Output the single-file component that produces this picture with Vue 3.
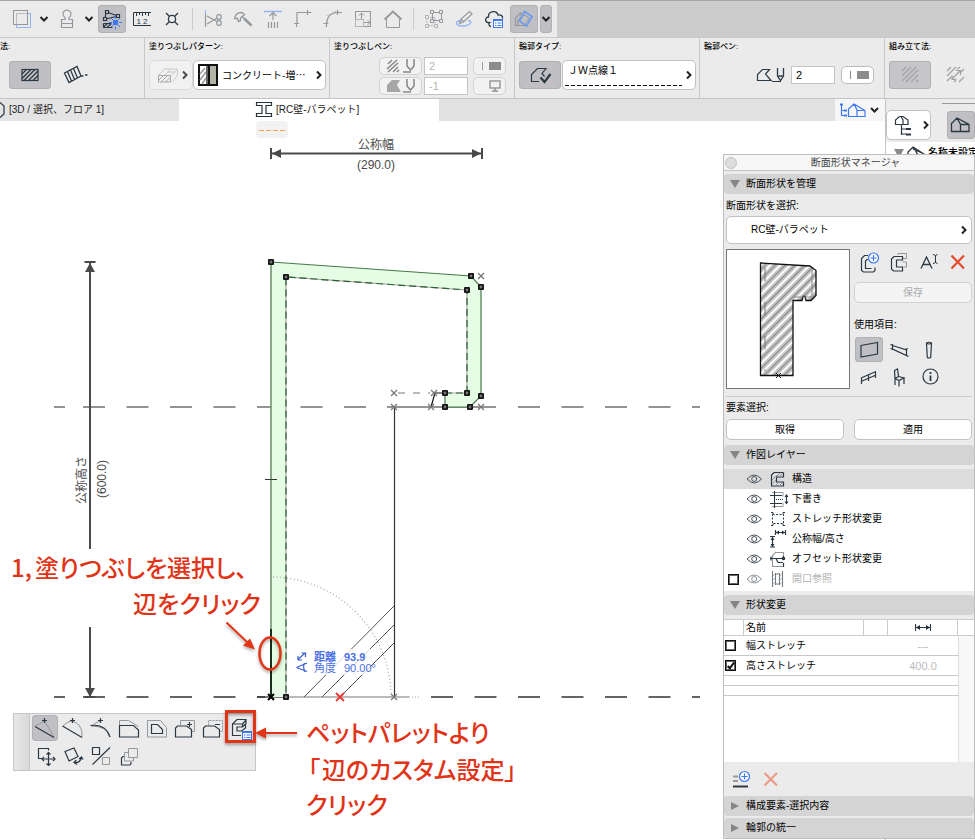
<script setup>
import { ref } from 'vue'

const INK = '#2c3842'
const DIM = '#94989c'
const BLUE = '#3f78f5'

const g = (stroke, body, width = 1) =>
  `<g fill="none" stroke="${stroke}" stroke-width="${width}">${body}</g>`

const listBadge = (x, y) =>
  `<rect x="${x}" y="${y}" width="9" height="8" fill="#fff" stroke="${BLUE}"/><path d="M${x} ${y + 0.5}h9" stroke="${BLUE}" stroke-width="2"/><path d="M${x + 1.5} ${y + 3.5}h1.5m1 0h4m-6.5 2.5h1.5m1 0h4" stroke="${BLUE}" fill="none"/>`

const icons = {
  duplicate: g('#8fb3f0', '<path d="M20 8.5h2.5v14h-14v-2.5"/>') + g(DIM, '<rect x="5.5" y="5.5" width="14" height="14"/>') + g('#b9bcbf', '<path d="M8.5 19V8.5H19"/>'),
  stamp: g(DIM, '<path d="M8.500 22.500v-8h3.500v-2a4 4 0 1 1 4 0v2h3.500v8zM8.500 18.500h11"/>', 1.2),
  magic: g(INK, '<path d="M8.500 7L20 11M8 7l-1 7M8 14l12-3M5.500 18.500h8M5.500 22.500h9M5.500 22l4-3.500M9.500 22l4-3.500M5.500 18.500v4"/><path d="M7.500 5.500h3v3h-3zM18.500 9.500h3v3h-3zM5.500 12.500h3v3h-3z" fill="#c0c0c4"/>', 1.2) + `<rect x="15" y="15" width="5" height="5" fill="${BLUE}"/>` + g(BLUE, '<path d="M17.500 11v3M17.500 21.500v3M11 17.500h3M21 17.500h3M13 13l2 2M22 13l-2 2M13 22l2-2M22 22l-2-2"/>'),
  ruler: g(INK, '<path d="M23 7.500H5.500v13H23M8.500 8v3M11.500 8v2M14.500 8v3M17.500 8v2M20.500 8v3"/>') + `<text x="8.500" y="19" font-size="8" font-family="Liberation Sans" fill="${INK}">1</text><text x="15" y="19" font-size="8" font-family="Liberation Sans" fill="${INK}">2</text>`,
  burst: g(INK, '<circle cx="14" cy="14" r="3.600"/><path d="M8 8l3.500 3.500M20 8l-3.500 3.500M8 20l3.500-3.500M20 20l-3.500-3.500"/>', 1.3),
  scissors: g('#8fb3f0', '<path d="M6.500 5v4"/>') + g(DIM, '<path d="M6.500 9v13M8 11l10 5.500M8 19l10-6"/><circle cx="20" cy="12" r="2.300"/><circle cx="20" cy="18" r="2.300"/>', 1.2),
  axe: g(DIM, '<path d="M5.500 13.500C6 10 8.500 7.500 13 7.500l2.500 2-4 3.500v2.500l-2 1-1-3z"/><path d="M13 11.500l9.500 9"/>', 1.3) + g(DIM, '<path d="M15 13.500l7.500 7"/>', 2.4),
  raise: g('#8fb3f0', '<path d="M5 6.500h18"/>', 1.4) + g(DIM, '<path d="M14 8v7M10.500 11L14 7.500l3.500 3.500M9.500 17v6M12.500 17v6M15.500 17v6M18.500 17v6"/>', 1.2),
  corner: g(DIM, '<path d="M8 8v11M18 7.500H7.500M22.500 7.500h-4M18.500 5v5M5 18.500h5M7.500 18v4"/>', 1.2),
  arc: g(DIM, '<path d="M7.500 19C8 12 12 7.500 19 7.500M4.500 18.500h5M18.500 5v5M16 7.500h7M7.500 19v3"/>', 1.2) + g('#bbb', '<path d="M8 11l9-5"/>'),
  resize: g(DIM, '<rect x="6.500" y="6.500" width="15" height="15"/><path d="M12.500 8v6M10 10.500L12.500 8l2.500 2.500M15 17.500h6M18.500 15l2.500 2.500-2.500 2.500"/>') + g('#b4b7ba', '<rect x="6.500" y="14.500" width="8" height="7"/>'),
  home: g(DIM, '<path d="M5.500 14.500L14 6.500l8.500 8"/>', 1.8) + g(DIM, '<path d="M7.500 14v8.500h13V14"/>'),
  nodes: g('#b0b3b6', '<path d="M7 12.500h8v8H7z" stroke-dasharray="2 1"/><path d="M5.500 10.500h3v3h-3zM5.500 19.500h3v3h-3zM14.500 19.500h3v3h-3z" fill="#ebebeb"/>') + g(DIM, '<path d="M12.500 7.500h9v8h-9z"/><path d="M10.500 5.500h3v3h-3zM19.500 5.500h3v3h-3zM10.500 14.500h3v3h-3zM19.500 14.500h3v3h-3z" fill="#ebebeb"/>'),
  sketch: g('#8fb3f0', '<path d="M12 15.500c-5 0-6.500 2-5 4 2 2 9 2 12 0 3-2 2-4-1-4"/>', 1.4) + g(DIM, '<path d="M9.500 18.500l1.500-4.500 8.500-7.500 2.500 2.500-8.500 8zM11 14l2.500 2.500"/>', 1.2),
  cloud: g(INK, '<path d="M11 21.500c-2.500 0-2.500-3-1.500-3.800-5 .3-5-5.700-1-5.700-.5-6 8.500-7.500 9.500-2 3.500-.500 5 1.500 4.500 3.500"/>', 1.3) + listBadge(13.5, 14.5),
  trace: g(DIM, '<path d="M12 8h-1.500l-5 5v7.500h11M10.500 8.500v2M8 20.500v-5l6-6"/>', 1.2) + g('#6d9bea', '<path d="M14.500 6.500l7.500 5-5.500 9.500-7-5z"/>', 1.8) + g(DIM, '<path d="M14 9.500l5 3.500-3.500 5.500"/>'),
  hatchRect: g(INK, '<rect x="6" y="8.500" width="16" height="11"/><path d="M6 13l4.500-4.500M6 17.500l9-9M8 19.500l11-11M12.500 19.500l9.500-9.500M17 19.500l5-5"/>', 1.2),
  hatchTilt: g(INK, '<path d="M3.500 12L16 5.500l4 9.500L8 21.500zM6.500 10.500l4 9.500M9.500 9l4 9.500M12.500 7.500l4 9.500M20 15h2.500m1.500-1h2.500"/>', 1.3),
  slab: g('#c0c3c5', '<path d="M5.500 14.500l6-6.500h13v6l-5 7M24.500 8l-6 6.500M14 11h8M18 8l-6 6"/>') + g(DIM, '<path d="M5.500 14.500h12v6.500h-12zM6 19l4-4M8 21l6-6M12.500 21l4.500-4.500"/>'),
  outlineType: g(INK, '<path d="M13 20.500H5.500v-7l6-6H20l-4 5 2.500 3"/>', 1.2) + g(INK, '<path d="M14.500 16.500l4 4.500 6-8"/>', 2.2),
  outlinePen: g(INK, '<path d="M1.500 13.500V7.500l5-5h7l-4 4.500 5.500 6.500H1.500zM16 14.500h9" stroke-width="1.200"/><path d="M21.500 1v8l3 4.500 3-4.500V1M22.500 9h4" stroke-width="1.300"/>'),
  hatchDim: g('#a0a2a4', '<path d="M6 10l4-4M6 15l9-9M6 20l14-14M10 21l12-12M15 21l7-7M20 21l2-2"/>', 1.1),
  hatchSwap: g('#9c9fa2', '<path d="M6 10l4-4M6 15l9-9M16 8l3-2M6 20l4-4M18 21l5-5M13 21l2-2M20 11l3-3M11 18l8-8M15 9.500h4.500V14M11 14v4.500h4.500"/>', 1.1),
  navTree: g(INK, '<path d="M3.500 13V8l4-3.500h3.500L16 8v4.500h-5V8L9 4.500M3.500 12.500h7.500M9.500 13v10M9.500 17h5M9.500 22h5"/>', 1.2) + g(INK, '<path d="M14 17h5M14 22.500h5"/>', 2),
  navHouse: g(INK, '<path d="M4.500 20.500v-8L10 7l12 6.500v7zM10 7l3.500 6.500v7M13.500 13.500h8"/>', 1.3),
  profileNew: g(INK, '<path d="M13 6.500H9.500l-3 3v12l2 1.500h10l1.500-1.500v-3M13 10.500h-1l-1.500 1.500v7.500h6"/>', 1.2) + g(BLUE, '<circle cx="18.500" cy="9" r="5" fill="#fff"/><path d="M18.500 6v6M15.500 9h6"/>', 1.2),
  profileCopy: g(DIM, '<path d="M13 6V4.500h8.500v5H17M17.500 13h4v5h-3"/>', 1) + g(INK, '<path d="M17.500 11V7.500H9l-2.500 2.500v10l2 2h9v-4h-6v-7z"/>', 1.2),
  rename: g(INK, '<path d="M6 19.500L11.500 8 17 19.500M8 15.500h7"/><path d="M18 5.500q2 0 2.500 1.500q.500-1.500 2-1.500M20.500 7v6.500M18 14.500q2 0 2.500-1.500q.500 1.500 2 1.500" stroke-width="1"/>', 1.3),
  remove: g('#e3492a', '<path d="M6.500 6.500l12.500 13M19 6.500l-12.500 13"/>', 2.2),
  useWall: g(INK, '<path d="M6 8.500l16.500-3v11.500L6 20z"/>', 1.2),
  useBeam: g(INK, '<path d="M7.500 8.500l14 4.500v5.500L7.500 12zM5.500 7.500l2.500 1M20 12.500l3-1M21.500 18.500l2 1M5.500 11.500l2 .500M7.500 7v6"/>', 1.2),
  useColumn: g(INK, '<path d="M11.500 6q2.500-1.500 5 0l-.800 14.500q-1.700 1-3.400 0zM11.500 6q2.500 2 5 0"/>', 1.2),
  useRail: g(INK, '<path d="M6 14l15-6.500M6 17.500l15-6.500M6.500 13.500v6.500M13.500 10.500v6.500M20.500 7.500v6.500"/>', 1.2),
  useObject: g(INK, '<path d="M9.500 6.500l3-1.500 1 7.500-3.500 2zM10 14.500l4 2 5-2.500-5.500-1.500M10 14.500v6.500M14 16.500v6M19 14v6"/>', 1.2),
  info: g(INK, '<circle cx="15.500" cy="12.500" r="7.500"/>', 1.2) + g(INK, '<path d="M15.500 11.500v5.500M15.500 8v2" />', 1.8),
  eye: g('#4a535b', '<path d="M1 7q7-8 14.500 0q-7 8-14.500 0z"/><circle cx="8.200" cy="7" r="2.500"/>', 1),
  layStructure: g(INK, '<path d="M13.500 1.500H4L1.500 4v11h12v-4H6.500V6h7v-4.500"/>', 1.2) + g(DIM, '<path d="M2 9l5-5M2 13l4-4M7 5l3-3M10 5l3-3M5 15l3-3M9 15l3-3"/>'),
  layDraft: g(DIM, '<path d="M2 1.500h11v4M2 15.500h11v-4"/>', 1) + g(INK, '<path d="M4.500 0v17M0 4.500h12M0 12.500h12"/><path d="M16.500 4v8M15 6l1.500-2L18 6M15 10.500l1.500 2 1.500-2"/><path d="M6 8.500h7" stroke-dasharray="1 1"/>', 1.1),
  layStretch: g(INK, '<path d="M2.500 3.500h11v9h-11z" stroke-dasharray="2 1.500"/><path d="M1 1.500h2v2M15 1.500h-2v2M1 14.500h2v-2M15 14.500h-2v-2"/>', 1),
  layNominal: g(INK, '<path d="M5.500 1.500h10M5.500-1v5M15.500-1v5M2.500 6v10M0 5.500h5M0 16h5"/><path d="M6 1.500l3-2v4zM15 1.500l-3-2v4zM2.500 6l-2 3h4zM2.500 16l-2-3h4z" fill="#26323c" stroke="none"/>', 1.2),
  layOffset: g(DIM, '<path d="M13.500 5V1.500h-8l-3 3v11h11"/>', 1.1) + g(INK, '<path d="M0 7.500h13M13.500 5v3M13.500 12v4M1 5.500v4M6 7.500l2 4h5"/><circle cx="13.500" cy="7.500" r="1.200" fill="#26323c"/>', 1.2),
  layOpening: g(INK, '<path d="M2.500 0v16M5.500 2v12M9.500 2v12M12.500 0v16M5.500 3h4M5.500 13h4"/>', 1.1) + g(DIM, '<path d="M3 5l2-2M3 9l2-2M3 13l2-2M10 5l2-2M10 9l2-2M10 13l2-2"/>'),
  widthMark: g(INK, '<path d="M0.500 1v7M15.500 1v7M1 4.500h14"/><path d="M1 4.500l4-2.500v5zM15 4.500l-4-2.500v5z" fill="#26323c" stroke="none"/>', 1.2),
  addRow: g('#999', '<path d="M7 11.500h5M7 16h5"/>', 2) + g(INK, '<path d="M7 21.500h15"/>', 2) + g(BLUE, '<circle cx="18.500" cy="11.500" r="5" fill="#fff"/><path d="M18.500 8.500v6M15.500 11.500h6"/>', 1.2),
  removeDim: g('#ec9a89', '<path d="M8.500 8L21 20.500M21 8L8.500 20.500"/>', 2.2),
  petNode: g(DIM, '<path d="M3 11.500L12.500 6 22 22"/>') + g(INK, '<path d="M3 11.500L22 22.500M10 5.500h5M12.500 3v5"/>', 1.2),
  petCurve: g(DIM, '<path d="M3 11q8-9 16-1 4 5 3 12"/>') + g(INK, '<path d="M2.500 11L22 22.500M10 5.500h5M12.500 3v5"/>', 1.2),
  petTangent: g(DIM, '<path d="M3 11q16 0 19 11M4 11q4-4 8-5"/>') + g(INK, '<path d="M2.500 10.500q15-2 19.500 11.500M10 5.500h5M12.500 3v5"/>', 1.2),
  petOffset: g(DIM, '<path d="M3.500 10.500V5.500h9l10 6"/>') + g(INK, '<path d="M3.500 10.500h14l5 4.500v7h-19z"/>', 1.2),
  petInset: g(DIM, '<path d="M3.500 5.500h13l6 7v9.500h-19z"/>') + g(INK, '<path d="M7.500 9.500h6l5 5v4h-11z"/>', 1.2),
  petAdd: g(DIM, '<path d="M8.500 10.500v-5h14v11H20"/>') + g(INK, '<path d="M3.500 22v-9l2-2h9l5 3.500V22zM15 9.500h5M17.500 7v5"/>', 1.2),
  petSub: g(DIM, '<path d="M8.500 10.500v-5h14v11H20" stroke-dasharray="2 1"/>') + g(INK, '<path d="M3.500 22v-9l2-2h9l5 3.500V22zM15 9.500h5"/>', 1.2),
  petCustom: g(INK, '<path d="M13 20.500H4.500V9L9 4.500h9v4L14.500 12H9v4h4.500l4-3V9M4.500 9h10v3M14.500 9L18 5"/>', 1.2) + listBadge(14.5, 16.5),
  petMove: g(INK, '<path d="M10 15.500H6.500V5.500h10v2M16.500 9.500v13M10 16h13"/><path d="M14.500 11.500l2-2 2 2M14.500 20.500l2 2 2-2M12 14l-2 2 2 2M21 14l2 2-2 2"/>', 1.2),
  petRotate: g(INK, '<path d="M5 8.500l9-3.500 4 8.500-9 4.500zM14 19.500q6 1 7.500-5M16.500 17l-2.500 2.500 3 2M19 16l2.500-2 1.500 2.500"/>', 1.2),
  petMirror: g(INK, '<path d="M4.500 4.500h7v7h-7zM4.500 21.500L22 4.500"/>', 1.2) + g(DIM, '<path d="M14.500 14.500h7v7h-7z"/>'),
  petMulti: g(DIM, '<path d="M12.500 5.500h9v9h-9zM12 9.500H8.500v8.500h9v-3"/>') + g(INK, '<path d="M8 13.500H7l-1.500 1.500v7h8.500l1-1.500V19"/>', 1.2)
}

const toolbar = [
  { name: '複製', icon: 'duplicate' },
  { name: '複製オプション', menu: true },
  { name: 'スタンプ', icon: 'stamp' },
  { name: 'スタンプオプション', menu: true },
  { name: 'マジックワンド', icon: 'magic', active: true },
  { name: '寸法', icon: 'ruler' },
  { name: '分解', icon: 'burst' },
  { divider: true },
  { name: '切断', icon: 'scissors' },
  { name: '分割', icon: 'axe' },
  { name: '調整', icon: 'raise' },
  { name: '交差', icon: 'corner' },
  { name: 'フィレット', icon: 'arc' },
  { name: 'サイズ変更', icon: 'resize' },
  { name: '屋根', icon: 'home' },
  { divider: true },
  { name: 'グループ', icon: 'nodes' },
  { name: 'スケッチ', icon: 'sketch' },
  { name: 'クラウド', icon: 'cloud' },
  { name: 'トレース', icon: 'trace', active: true },
  { name: 'トレースオプション', menu: true, active: true }
]

const profileActions = [
  { name: '新規', icon: 'profileNew' },
  { name: '複製', icon: 'profileCopy' },
  { name: '名前変更', icon: 'rename' },
  { name: '削除', icon: 'remove' }
]

const usages = [
  { name: '壁', icon: 'useWall' },
  { name: '梁', icon: 'useBeam' },
  { name: '柱', icon: 'useColumn' },
  { name: '手摺り', icon: 'useRail' },
  { name: 'オブジェクト', icon: 'useObject' },
  { name: '情報', icon: 'info' }
]
const activeUsage = ref('壁')

const layers = [
  { name: '構造', icon: 'layStructure' },
  { name: '下書き', icon: 'layDraft' },
  { name: 'ストレッチ形状変更', icon: 'layStretch' },
  { name: '公称幅/高さ', icon: 'layNominal' },
  { name: 'オフセット形状変更', icon: 'layOffset' },
  { name: '開口参照', icon: 'layOpening', optional: true }
]
const activeLayer = ref('構造')

const modifiers = ref([
  { name: '幅ストレッチ', value: '---', on: false },
  { name: '高さストレッチ', value: '400.0', on: true }
])

const petTools = [
  'petNode', 'petCurve', 'petTangent', 'petOffset', 'petInset', 'petAdd', 'petSub', 'petCustom',
  'petMove', 'petRotate', 'petMirror', 'petMulti'
]
const petNames = [
  '頂点を挿入', '曲線', '接線', '辺をオフセット', '全ての辺をオフセット', '追加', '削除', '辺のカスタム設定',
  '移動', '回転', 'ミラー', '複数コピー'
]

const nodes = [
  [271, 262], [286, 277], [471, 276], [481, 287], [467, 290], [481, 396],
  [467, 393], [445, 393], [445, 407], [470, 407], [286, 697]
]
const crosses = [[481, 276], [394, 393], [394, 407], [434, 393], [431, 407], [481, 407], [394, 697]]
const lineType = ref('ＪＷ点線１')
const pen = ref('2')
</script>

<template>
  <div class="app">
    <header class="toolbar">
      <div class="tools">
        <template v-for="(t, i) in toolbar" :key="i">
          <span v-if="t.divider" class="divider"></span>
          <button v-else :class="['tool', { menu: t.menu, active: t.active }]" :aria-label="t.name">
            <svg v-if="t.menu" width="12" height="28"><path class="chev" d="M2.500 12l3.500 3.500 3.500-3.500" /></svg>
            <svg v-else width="28" height="28" v-html="icons[t.icon]"></svg>
          </button>
        </template>
      </div>
    </header>

    <section class="infobar">
      <div class="group first">
        <h2>法:</h2>
        <div class="controls method">
          <button class="wide active" aria-label="多角形"><svg width="28" height="28" v-html="icons.hatchRect"></svg></button>
          <button class="plain" aria-label="回転矩形"><svg width="28" height="28" v-html="icons.hatchTilt"></svg></button>
        </div>
      </div>
      <div class="group">
        <h2>塗りつぶしパターン:</h2>
        <div class="controls">
          <button class="box faded" aria-label="塗りつぶしの種類">
            <svg width="28" height="28" v-html="icons.slab"></svg>
            <svg width="6" height="10"><path class="chev" d="M1 1.500L4.500 5 1 8.500" /></svg>
          </button>
          <label class="box field">
            <svg width="20" height="22">
              <rect x="1" y="1" width="18" height="20" fill="#fff" stroke="#111" stroke-width="2" />
              <path d="M2 10l5-6M2 16l6-8M4 20l4-6" stroke="#999" stroke-width="1.500" />
              <rect x="12" y="2" width="6" height="18" fill="#b3b3a6" />
              <path d="M9 2v18" stroke="#666" stroke-width="2" /><path d="M11 1v20" stroke="#111" stroke-width="2" />
            </svg>
            <select class="pattern" aria-label="塗りつぶしパターン"><option>コンクリート-増…</option></select>
            <svg width="6" height="10"><path class="chev" d="M1 1.500L4.500 5 1 8.500" /></svg>
          </label>
        </div>
      </div>
      <div class="group">
        <h2>塗りつぶしペン:</h2>
        <div class="pens">
          <button class="small" aria-label="前景ペン">
            <svg width="32" height="16" viewBox="0 0 32 16"><g fill="none" stroke="#858789" stroke-width="1.500"><path d="M3 6l4-4M2 11l10-9M3 14l10-9M8 14l5-5M12 14l2-2M18 14h8" /><path d="M22 1v7l3.500 4L29 8V1" /></g></svg>
          </button>
          <input value="2" aria-label="前景ペン番号" disabled />
          <button class="small swatch" aria-label="前景ペンの色"><svg width="24" height="10"><path d="M5.500 1v8" stroke="#999" /><rect x="12" y="1" width="12" height="8" fill="#8c8c8c" /></svg></button>
          <button class="small" aria-label="背景ペン">
            <svg width="32" height="16" viewBox="0 0 32 16"><path d="M2 14V7l5-5h8l-3 5 4 7z" fill="#a4a6a8" /><g fill="none" stroke="#858789" stroke-width="1.500"><path d="M18 14h8M22 1v7l3.500 4L29 8V1" /></g></svg>
          </button>
          <input value="-1" aria-label="背景ペン番号" disabled />
          <button class="small swatch" aria-label="背景ペンの色"><svg width="24" height="12"><g fill="none" stroke="#8c8c8c" stroke-width="1.300"><rect x="13" y="1" width="10" height="7" /><path d="M18 8v3M15 11h6" /></g></svg></button>
        </div>
      </div>
      <div class="group">
        <h2>輪郭タイプ:</h2>
        <div class="controls">
          <button class="wide active" aria-label="輪郭"><svg width="28" height="28" v-html="icons.outlineType"></svg></button>
          <label class="box field line">
            <span class="line-body">
              <select v-model="lineType" aria-label="輪郭タイプ"><option>ＪＷ点線１</option></select>
              <svg width="100%" height="3"><path d="M0 1.500h400" stroke="#111" stroke-dasharray="4 2" /></svg>
            </span>
            <svg width="6" height="10"><path class="chev" d="M1 1.500L4.500 5 1 8.500" /></svg>
          </label>
        </div>
      </div>
      <div class="group">
        <h2>輪郭ペン:</h2>
        <div class="controls pen">
          <svg width="29" height="16" v-html="icons.outlinePen"></svg>
          <input v-model="pen" aria-label="輪郭ペン番号" />
          <button class="small swatch solid" aria-label="輪郭ペンの色"><svg width="24" height="10"><path d="M5.500 1v8" stroke="#888" /><rect x="12" y="1" width="12" height="8" fill="#8c8c8c" /></svg></button>
        </div>
      </div>
      <div class="group">
        <h2>組み立て法:</h2>
        <div class="controls">
          <button class="wide active pale" aria-label="塗りつぶし"><svg width="28" height="28" v-html="icons.hatchDim"></svg></button>
          <button class="plain" aria-label="方向を合わせる"><svg width="28" height="28" v-html="icons.hatchSwap"></svg></button>
        </div>
      </div>
    </section>

    <main class="workspace">
      <div class="view">
        <nav class="tabs">
          <a class="tab back" href="#view3d">
            <svg width="6" height="18"><path d="M-6 1.500L0 1.500 4 5v8l-4 3.500" fill="none" stroke="#26323c" stroke-width="1.200" /></svg>
            <span>[3D / 選択、フロア 1]</span>
          </a>
          <a class="tab current" href="#profile">
            <svg width="18" height="18"><path d="M1.500 1.500h15v3h-5.500v8h5.500v3h-15v-3H7v-8H1.500z" fill="none" stroke="#26323c" stroke-width="1.200" /></svg>
            <span>[RC壁-パラペット]</span>
          </a>
          <button class="popup" aria-label="ナビゲータ">
            <svg width="28" height="18"><g fill="none" stroke="#3f78f5" stroke-width="1.200"><path d="M2.500 4v10.500h4M2.500 9.500h4M9.500 15.500V8L15 3l11 6.500v6zM15 3l3 6v6M18 9.500h8" /><path d="M1 3.500h3M5 9.500h3M5 14.500h3" stroke-width="2" /></g></svg>
            <svg width="9" height="6"><path class="chev" d="M1 1l3.500 3.500L8 1" /></svg>
          </button>
        </nav>

        <div class="canvas">
          <svg class="drawing">
            <defs>
              <filter id="soft" x="-50%" y="-50%" width="200%" height="200%"><feDropShadow dx="0" dy="2" stdDeviation="1.500" flood-opacity="0.350" /></filter>
            </defs>
            <g transform="translate(0 -121)">
              <rect x="256" y="121" width="32" height="17" rx="4" fill="#f2f2f2" />
              <path d="M259 130.500h27" stroke="#f5a352" stroke-width="1.200" stroke-dasharray="5 2" />

              <g stroke="#707070" fill="none" stroke-width="1.500">
                <path d="M54 407h11M83 407h304" stroke-dasharray="22 21.500" />
                <path d="M387 407h109" /><path d="M518 407h182" stroke-dasharray="22 21.500" />
              </g>
              <g stroke="#333" fill="none" stroke-width="1.300">
                <path d="M54 697h11M83 697h182" stroke-dasharray="22 21.500" />
                <path d="M257 697h29" /><path d="M431 697h269" stroke-dasharray="22 21.500" />
              </g>
              <path d="M286 697h123" stroke="#777" /><path d="M409 697h12" stroke="#aaa" stroke-dasharray="1 2" />

              <g stroke="#4a4a4a" fill="#4a4a4a" stroke-width="2">
                <path d="M272 153.500h209M271 148v11M482 148v11" />
                <path d="M272 153.500l9-4.500v9zM481 153.500l-9-4.500v9z" stroke="none" />
                <path d="M90 263v286M90 627v70M84.500 262h11M84.500 697h11" />
                <path d="M90 263l-5 9h10zM90 697l-5-9h10z" stroke="none" />
              </g>
              <g class="dim">
                <text x="376" y="149">公称幅</text>
                <text x="376" y="169">(290.0)</text>
                <text transform="translate(86 480) rotate(-90)">公称高さ</text>
                <text transform="translate(106 479) rotate(-90)">(600.0)</text>
              </g>

              <path d="M271 262L471 276 481 287V396L470 407H445V393H467V290L286 277V697H271z" fill="#e4fde4" />
              <path d="M271 262L471 276 481 287V396L470 407H445V393" fill="none" stroke="#477a4a" stroke-width="1.200" />
              <path d="M271 262V629" stroke="#6f936f" stroke-width="1.600" />
              <path d="M271 629v68" stroke="#17301b" stroke-width="2" />
              <path d="M445 393H467V290L286 277V697" fill="none" stroke="#a5a5a5" stroke-width="1.200" />
              <path d="M445 393H467V290L286 277V697" fill="none" stroke="#2c5f32" stroke-width="1.200" stroke-dasharray="7 4" />
              <path d="M265 479.500h12" stroke="#333" />

              <path d="M394.500 407v290" stroke="#333" stroke-width="1.200" />
              <path d="M398 393h32" stroke="#777" stroke-dasharray="7 8" />
              <path d="M445 393h-10l-4 14" fill="none" stroke="#111" stroke-width="1.200" />
              <path d="M304 697l90-91M322 697l72-72M340 697l54-54" stroke="#555" fill="none" />
              <path d="M273 577a120 120 0 0 1 118 120" fill="none" stroke="#aaa" stroke-width="1.300" stroke-dasharray="1 2.500" />

              <path v-for="([x, y], i) in crosses" :key="'c' + i" :d="`M${x - 3} ${y - 3}l6 6m0-6l-6 6`" stroke="#777" stroke-width="1.300" />
              <g v-for="([x, y], i) in nodes" :key="'n' + i">
                <rect :x="x - 3" :y="y - 3" width="6" height="6" rx="1" fill="#151515" />
                <circle :cx="x" :cy="y" r="1.400" fill="#777" />
              </g>
              <path d="M268 694l6 6m0-6l-6 6" stroke="#000" stroke-width="2" />
              <path d="M336 693l8 8m0-8l-8 8" stroke="#e33" stroke-width="1.800" />

              <rect x="294" y="649" width="76" height="26" fill="#fff" opacity="0.750" />
              <g stroke="#3c5fd0" fill="none" stroke-width="1.200">
                <path d="M298 659.500l7-6.500M301.500 653h4v4M298 656v4h4" />
                <path d="M296.500 667.500l10.500-4.500M296.500 667.500l10.500 4M304.500 663q-2 4 .500 9" />
              </g>
              <g class="tracker">
                <g class="strong"><text x="314" y="661">距離</text><text x="344" y="661">93.9</text></g>
                <text x="314" y="672">角度</text><text x="344" y="672">90.00°</text>
              </g>
            </g>
          </svg>

          <div class="palette">
            <div class="grip"></div>
            <div class="pet">
              <button v-for="(p, i) in petTools" :key="p" :class="{ active: i === 0 }" :aria-label="petNames[i]">
                <svg width="26" height="26" v-html="icons[p]"></svg>
              </button>
            </div>
          </div>

          <svg class="drawing notes">
            <g transform="translate(0 -121)">
              <g fill="none" stroke="#e03418" filter="url(#soft)">
                <ellipse cx="270" cy="653.500" rx="10.500" ry="16" stroke-width="2.500" />
                <rect x="226.500" y="711.500" width="28" height="30" stroke-width="3" />
                <path d="M226.500 622.500l21 20M297 733h-35" stroke-width="2" />
                <path d="M255 649.500l-12-4 7-7zM255 733l11-5.500v11z" fill="#e03418" stroke="none" />
              </g>
              <g class="note">
                <text x="11" y="577">1,<tspan x="35">塗りつぶしを選択し、</tspan></text>
                <text x="133" y="613">辺をクリック</text>
                <text x="306" y="742">ペットパレットより</text>
                <text x="308" y="779">「<tspan x="322">辺のカスタム設定」</tspan></text>
                <text x="306" y="814">クリック</text>
              </g>
            </g>
          </svg>
        </div>
      </div>

      <aside class="navigator">
        <div class="nav-bar">
          <button class="box" aria-label="プロジェクト一覧">
            <svg width="24" height="26" v-html="icons.navTree"></svg>
            <svg width="6" height="10"><path class="chev" d="M1 1.500L4.500 5 1 8.500" /></svg>
          </button>
          <button class="square active" aria-label="プロジェクト一覧を表示"><svg width="28" height="28" v-html="icons.navHouse"></svg></button>
        </div>
        <div class="nav-tree">
          <svg width="10" height="9"><path d="M0 0h10l-5 9z" fill="#888" /></svg>
          <svg width="18" height="15"><path d="M1 15V6l5-5 11 7v7M6 1l5 8v6M6 3l9 4" fill="none" stroke="#26323c" stroke-width="1.300" /></svg>
          <span>名称未設定</span>
        </div>
      </aside>

      <section class="manager">
        <div class="title"><button aria-label="閉じる"></button><h1>断面形状マネージャ</h1></div>
        <button class="head"><svg width="10" height="8"><path d="M0 0h10l-5 8z" fill="#858585" /></svg>断面形状を管理</button>

        <div class="manage">
          <label for="profile">断面形状を選択:</label>
          <div class="profile">
            <select id="profile"><option>RC壁-パラペット</option></select>
            <svg width="6" height="10"><path class="chev" d="M1 1.500L4.500 5 1 8.500" /></svg>
          </div>
          <div class="split">
            <svg class="preview" viewBox="0 0 122 137">
              <defs>
                <pattern id="fill" width="7" height="7" patternUnits="userSpaceOnUse" patternTransform="rotate(-45)">
                  <path d="M0 1h7M0 2.500h7M0 4h7" stroke="#777" stroke-width="0.900" />
                </pattern>
              </defs>
              <path d="M33.500 12.500L83 15.500 89 20V45L84 50H79l-1-4h-2l-1 4H66V125H33.500z" fill="url(#fill)" stroke="#111" stroke-width="1.300" />
              <path d="M38 17v104" fill="none" stroke="#777" stroke-dasharray="14 20" />
              <path d="M66 46.500h19V19" fill="none" stroke="#888" />
              <path d="M49 122.500l5 5m0-5l-5 5" stroke="#111" />
            </svg>
            <div class="side">
              <div class="actions">
                <button v-for="a in profileActions" :key="a.name" :aria-label="a.name"><svg width="28" height="26" v-html="icons[a.icon]"></svg></button>
              </div>
              <button class="push" disabled>保存</button>
              <p>使用項目:</p>
              <div class="usage">
                <button v-for="u in usages" :key="u.name" :class="{ active: u.name === activeUsage }" :aria-label="u.name" @click="activeUsage = u.name">
                  <svg width="28" height="26" v-html="icons[u.icon]"></svg>
                </button>
              </div>
            </div>
          </div>
          <hr />
          <p>要素選択:</p>
          <div class="pair"><button class="push">取得</button><button class="push">適用</button></div>
        </div>

        <button class="head"><svg width="10" height="8"><path d="M0 0h10l-5 8z" fill="#858585" /></svg>作図レイヤー</button>
        <ul class="layers">
          <li v-for="l in layers" :key="l.name" :class="{ selected: l.name === activeLayer, off: l.optional }" @click="activeLayer = l.name">
            <input v-if="l.optional" type="checkbox" :aria-label="l.name" />
            <button class="eye" aria-label="表示"><svg width="17" height="14" v-html="icons.eye"></svg></button>
            <svg class="kind" width="19" height="17" v-html="icons[l.icon]"></svg>
            <span>{{ l.name }}</span>
          </li>
        </ul>

        <button class="head"><svg width="10" height="8"><path d="M0 0h10l-5 8z" fill="#858585" /></svg>形状変更</button>
        <div class="modifiers">
          <table>
            <colgroup><col class="c-check" /><col /><col class="c-mid" /><col class="c-value" /><col class="c-bar" /></colgroup>
            <thead>
              <tr><th></th><th class="name">名前</th><th></th><th><svg width="16" height="9" v-html="icons.widthMark"></svg></th><th></th></tr>
            </thead>
            <tbody>
              <tr v-for="m in modifiers" :key="m.name">
                <td><input v-model="m.on" type="checkbox" :aria-label="m.name" /></td>
                <td class="name">{{ m.name }}</td>
                <td></td>
                <td class="value">{{ m.value }}</td>
                <td></td>
              </tr>
              <tr v-for="n in 2" :key="n" class="blank"><td></td><td></td><td></td><td></td><td></td></tr>
            </tbody>
          </table>
          <div class="filler"></div>
        </div>
        <div class="foot">
          <button aria-label="追加"><svg width="28" height="28" v-html="icons.addRow"></svg></button>
          <button aria-label="取り除く"><svg width="28" height="28" v-html="icons.removeDim"></svg></button>
        </div>
        <button class="head"><svg width="10" height="10"><path d="M1 1l8 4-8 4z" fill="#858585" /></svg>構成要素-選択内容</button>
        <button class="head last"><svg width="10" height="10"><path d="M1 1l8 4-8 4z" fill="#858585" /></svg>輪郭の統一</button>
      </section>
    </main>
  </div>
</template>

<style>
body {
  margin: 0;
  overflow: hidden;
}
</style>

<style scoped>
.app {
  display: flex;
  flex-direction: column;
  height: 100vh;
  overflow: hidden;
  background: #fff;
  color: #000;
  font: 10px/14px "Liberation Sans", "Noto Sans CJK JP", sans-serif;
}
.app * { box-sizing: border-box; }
button, input, select {
  margin: 0;
  padding: 0;
  border: 0;
  background: none;
  color: inherit;
  font: inherit;
  appearance: none;
}
svg { display: block; flex: none; }
h1, h2, p { margin: 0; font: inherit; }
.chev { fill: none; stroke: #222; stroke-width: 2; }

.toolbar {
  flex: none;
  height: 38px;
  border-top: 1px solid #a6a6a6;
  border-bottom: 1px solid #c8c8c8;
  background: #ccc;
}
.tools {
  display: flex;
  align-items: center;
  gap: 2px;
  width: max-content;
  height: 100%;
  padding: 0 4px 0 8px;
  background: #ebebeb;
}
.tool { height: 28px; border-radius: 4px; }
.tool.menu { width: 12px; margin-right: 1px; }
.tool.active { background: #bfbfc4; box-shadow: inset 0 0 0 1px #b0b0b5; }
.divider { width: 9px; height: 22px; background: linear-gradient(#ccc, #ccc) center / 1px 100% no-repeat; }

.infobar {
  flex: none;
  display: grid;
  grid-template-columns: 145px repeat(4, 185px) 1fr;
  height: 61px;
  border-bottom: 1px solid #c4c4c4;
  background: #ebebeb;
}
.group {
  min-width: 0;
  padding: 2px 3px 0 4px;
  border-right: 1px solid #c8c8c8;
  overflow: hidden;
}
.group:last-child { border-right: 0; }
.group h2 { height: 14px; font-size: 8px; font-weight: 500; }
.group.first { padding-left: 0; }
.controls { display: flex; align-items: center; height: 42px; }
.method { padding-left: 9px; gap: 10px; }
.wide { flex: none; width: 42px; height: 28px; border-radius: 4px; }
.wide svg { margin: auto; }
.square { flex: none; width: 28px; height: 28px; border-radius: 4px; }
.plain { width: 28px; margin-left: 10px; }
.method .plain { margin-left: 0; }
.active { background: #bfbfc4; box-shadow: inset 0 0 0 1px #b0b0b5; }
.active.pale { background: #c6c6c8; }
.box {
  display: flex;
  align-items: center;
  height: 30px;
  border: 1px solid #c2c2c2;
  border-radius: 5px;
  background: #fff;
}
.box.faded { gap: 1px; width: 44px; padding: 0 4px 0 3px; background: #f3f3f3; border-color: #d6d6d6; opacity: 0.8; }
.field { flex: 1; min-width: 0; gap: 4px; padding: 0 3px 0 4px; }
.field select { flex: 1; min-width: 0; width: 100%; }
.pattern { font-family: "Noto Sans CJK JP", sans-serif; }
.line { padding-left: 2px; margin-left: 1px; }
.line-body { flex: 1; display: grid; gap: 6px; min-width: 0; overflow: hidden; }
.line-body select { padding-left: 3px; line-height: 14px; }
.pens {
  display: grid;
  grid-template-columns: 43px 44px 34px;
  grid-auto-rows: 18px;
  gap: 2px;
  align-items: center;
  justify-content: end;
  padding: 3px 7px 0 0;
}
.small {
  display: flex;
  align-items: center;
  justify-content: center;
  height: 18px;
  border: 1px solid #d2d2d2;
  border-radius: 5px;
  background: #f2f2f2;
}
.swatch { width: 33px; margin-left: 3px; }
.swatch svg { margin-right: 2px; }
.solid { background: #fff; border-color: #bbb; }
input:not([type]) {
  width: 44px;
  height: 18px;
  padding-left: 4px;
  border: 1px solid #c4c4c4;
  background: #fff;
  font-size: 11px;
}
input:disabled { color: #b4b4b4; }
.pen { justify-content: flex-end; gap: 6px; padding-right: 7px; }
.pen .swatch { margin: 0; }

.workspace { position: relative; flex: 1; display: flex; min-height: 0; }
.view { flex: 1; display: flex; flex-direction: column; min-width: 0; }
.tabs { flex: none; display: flex; height: 22px; background: #e1e1e1; }
.tab { display: flex; align-items: center; gap: 3px; color: #222; text-decoration: none; }
.back { width: 179px; background: #e4e4e4; }
.current { width: 260px; padding-left: 76px; background: #fff; }
.popup {
  display: flex;
  align-items: center;
  gap: 3px;
  margin-left: auto;
  padding: 0 6px 0 4px;
  background: #f6f6f6;
}
.canvas { position: relative; flex: 1; background: #fff; }
.drawing { position: absolute; inset: 0; width: 100%; height: 100%; }
.notes { pointer-events: none; }
.dim { font-size: 12px; fill: #4a4a4a; text-anchor: middle; }
.tracker { font-size: 11px; fill: #4c70e6; }
.strong { font-weight: 700; }
.note {
  font: 500 24px "Noto Sans CJK JP", sans-serif;
  font-feature-settings: "palt";
  fill: #e03418;
}

.palette {
  position: absolute;
  left: 13px;
  top: 592px;
  display: flex;
  width: 243px;
  border: 1px solid #c6c6c6;
  background: #ebebeb;
}
.grip { width: 16px; border-right: 1px solid #c6c6c6; background: linear-gradient(90deg, #e8e8e8, #d8d8d8); }
.pet {
  display: grid;
  grid-template-columns: repeat(8, 26px);
  gap: 2px;
  padding: 1px 0 1px 2px;
}
.pet button { height: 26px; border-radius: 4px; }

.navigator { flex: none; width: 90px; border-left: 1px solid #c4c4c4; background: #ebebeb; overflow: hidden; display: flex; flex-direction: column; }
.nav-bar {
  flex: none;
  display: flex;
  align-items: center;
  gap: 16px;
  height: 43px;
  padding-top: 9px;
  background: linear-gradient(#999, #999) 56px 4px / 40px 1px no-repeat;
}
.nav-bar .box { flex: none; width: 45px; gap: 7px; padding-left: 5px; }
.nav-tree {
  flex: 1;
  display: flex;
  align-items: flex-start;
  gap: 3px;
  padding: 4px 0 0 8px;
  background: #fff;
  font-weight: 500;
  white-space: nowrap;
}
.nav-tree svg:first-child { margin-top: 3px; }

.manager {
  position: absolute;
  top: 55px;
  right: 0;
  width: 252px;
  border: 1px solid #bdbdbd;
  background: #ebebeb;
}
.title {
  display: flex;
  align-items: center;
  height: 16px;
  margin-bottom: 3px;
  border-bottom: 1px solid #c4c4c4;
  background: #f6f6f6;
}
.title button { width: 12px; height: 12px; margin-left: 1px; border: 1px solid #c4c4c4; border-radius: 50%; background: #dcdcdc; }
.title h1 { flex: 1; color: #444; text-align: center; }
.head {
  display: flex;
  align-items: center;
  gap: 6px;
  width: 100%;
  height: 20px;
  padding-left: 6px;
  border-radius: 4px;
  background: #d4d4d4;
  text-align: left;
}
.last { margin-top: 2px; }
.manage { padding: 5px 2px; }
.manage label, .manage p { display: block; height: 14px; }
.profile {
  display: flex;
  align-items: center;
  height: 28px;
  margin: 3px 0 5px;
  padding: 0 4px 0 24px;
  border: 1px solid #c2c2c2;
  border-radius: 5px;
  background: #fff;
}
.profile select { flex: 1; height: 100%; }
.split { display: flex; justify-content: space-between; }
.preview { width: 124px; height: 140px; border: 1px solid #777; background: #fff; }
.side { width: 118px; }
.actions { display: flex; gap: 2px; padding-left: 1px; }
.actions button { width: 28px; height: 26px; }
.push {
  width: 118px;
  height: 21px;
  border: 1px solid #c2c2c2;
  border-radius: 5px;
  background: #fff;
}
.push:disabled { margin: 7px 0 15px; background: #f4f4f4; border-color: #d2d2d2; color: #aaa; }
.usage { display: grid; grid-template-columns: repeat(3, 28px); gap: 2px; margin-top: 5px; padding-left: 1px; }
.usage button { height: 25px; border-radius: 4px; }
.usage svg { height: 25px; }
hr { height: 1px; margin: 7px 0 4px; border: 0; background: #ccc; }
.pair { display: flex; justify-content: space-between; margin-top: 4px; }
.layers { margin: 4px 0; padding: 0 0 2px; list-style: none; background: #fff; }
.layers li {
  display: grid;
  grid-template-columns: 17px 17px 19px 1fr;
  column-gap: 5px;
  align-items: center;
  height: 20px;
}
.layers li > * { grid-row: 1; }
.layers .eye { grid-column: 2; }
.layers .kind { grid-column: 3; margin-left: 2px; overflow: visible; }
.layers span { grid-column: 4; }
.selected { background: #dcdcdc; }
.off { color: #b4b4b4; }
.off .eye, .off .kind { opacity: 0.65; }
input[type="checkbox"] {
  display: flex;
  align-items: center;
  justify-content: center;
  width: 11px;
  height: 11px;
  border: 1px solid #111;
  outline: 1px solid #666;
  outline-offset: -2px;
  background: #fff;
}
input[type="checkbox"]:checked::after {
  content: "";
  width: 2px;
  height: 6px;
  margin-bottom: 2px;
  border: solid #111;
  border-width: 0 2px 2px 0;
  transform: rotate(38deg);
}
.layers input { margin-left: 4px; }
.modifiers { display: flex; flex-direction: column; height: 143px; margin-top: 4px; background: #fff; }
table { width: 100%; table-layout: fixed; border-collapse: separate; border-spacing: 0; }
.c-check { width: 20px; }
.c-mid { width: 24px; }
.c-value { width: 70px; }
.c-bar { width: 16px; }
th, td { height: 20px; padding: 0; }
th { height: 17px; border: solid #ccc; border-width: 1px 1px 1px 0; font-weight: 400; line-height: 10px; }
th:last-child { border-right: 0; }
th svg { margin: auto; }
td { border-bottom: 1px solid #c8c8c8; }
td:last-child { border-bottom: 0; border-left: 1px solid #ddd; background: #f8f8f8; }
td input { margin-left: 1px; }
.name { padding-left: 2px; text-align: left; }
.value { color: #bbb; text-align: center; font-size: 11px; }
.blank td { height: 10px; }
.filler { flex: 1; width: 16px; margin-left: auto; border-left: 1px solid #ddd; background: #f8f8f8; }
.foot { display: flex; gap: 2px; height: 34px; padding: 2px; align-items: center; }
</style>
